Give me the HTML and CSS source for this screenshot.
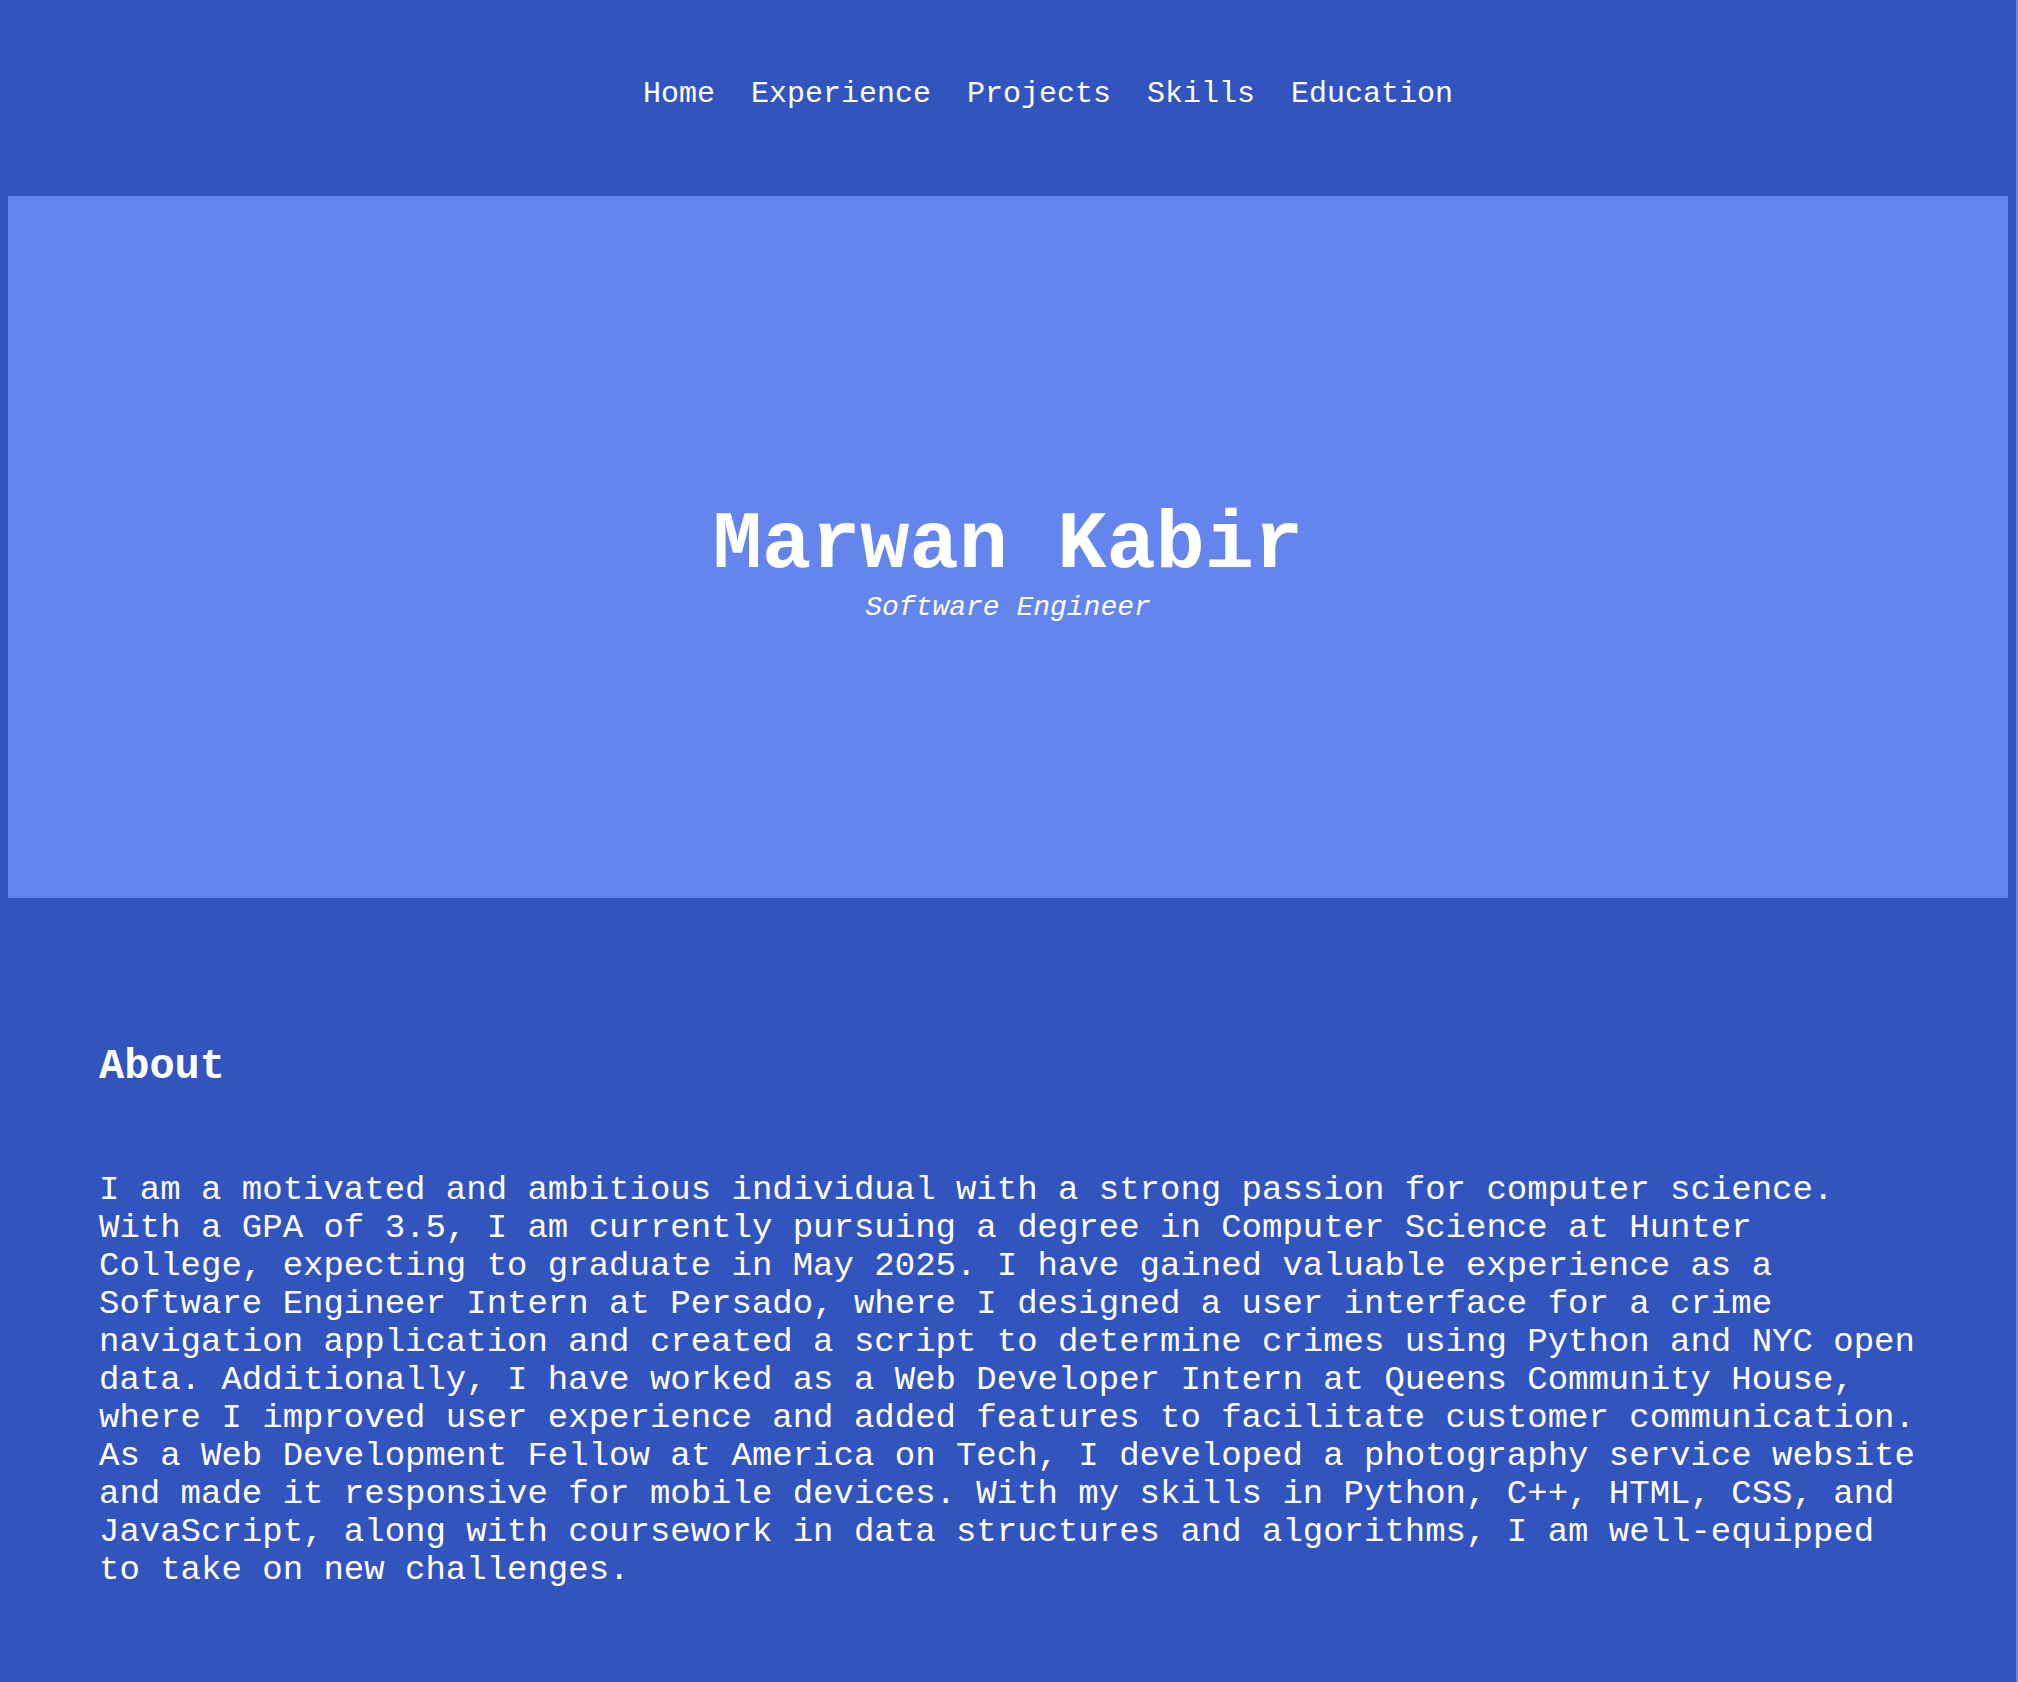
FILE: index.html
```html
<!DOCTYPE html>
<html lang="en">
<head>
<meta charset="utf-8">
<title>Marwan Kabir</title>
<link rel="stylesheet" href="styles.css">
</head>
<body>
<header class="site-header">
  <nav class="nav">
    <a class="nav-link" href="#home">Home</a>
    <a class="nav-link" href="#experience">Experience</a>
    <a class="nav-link" href="#projects">Projects</a>
    <a class="nav-link" href="#skills">Skills</a>
    <a class="nav-link" href="#education">Education</a>
  </nav>
</header>
<section class="hero" id="home">
  <h1 class="hero-name">Marwan Kabir</h1>
  <p class="hero-role">Software Engineer</p>
</section>
<section class="about">
  <h2 class="about-title">About</h2>
  <p class="about-text">I am a motivated and ambitious individual with a strong passion for computer science. With a GPA of 3.5, I am currently pursuing a degree in Computer Science at Hunter College, expecting to graduate in May 2025. I have gained valuable experience as a Software Engineer Intern at Persado, where I designed a user interface for a crime navigation application and created a script to determine crimes using Python and NYC open data. Additionally, I have worked as a Web Developer Intern at Queens Community House, where I improved user experience and added features to facilitate customer communication. As a Web Development Fellow at America on Tech, I developed a photography service website and made it responsive for mobile devices. With my skills in Python, C++, HTML, CSS, and JavaScript, along with coursework in data structures and algorithms, I am well-equipped to take on new challenges.</p>
</section>
</body>
</html>
```

FILE: styles.css
```css
html {
  background: #3254bf;
  border-right: 2px solid #6f86d6;
  min-height: 100%;
}
body {
  margin: 0 8px;
  min-height: 1682px;
  background: #3254bf;
  color: #ffffff;
  font-family: "Courier New", "Liberation Mono", monospace;
}
.site-header {
  padding: 77px 0 85px;
}
.nav {
  display: flex;
  justify-content: center;
  gap: 36px;
  padding-left: 80px;
  font-size: 30px;
  line-height: 34px;
}
.nav-link {
  color: #ffffff;
  text-decoration: none;
}
.hero {
  box-sizing: border-box;
  height: 702px;
  padding-top: 303px;
  background: #6485ee;
  text-align: center;
}
.hero-name {
  margin: 0;
  font-size: 82px;
  font-weight: bold;
  line-height: 93px;
}
.hero-role {
  margin: 0;
  font-size: 28px;
  font-style: italic;
  line-height: 32px;
}
.about {
  padding: 145px 89px 0 91px;
}
.about-title {
  margin: 0 0 80px;
  font-size: 42px;
  font-weight: bold;
  line-height: 48px;
}
.about-text {
  margin: 0;
  font-size: 34px;
  line-height: 38px;
}
```
